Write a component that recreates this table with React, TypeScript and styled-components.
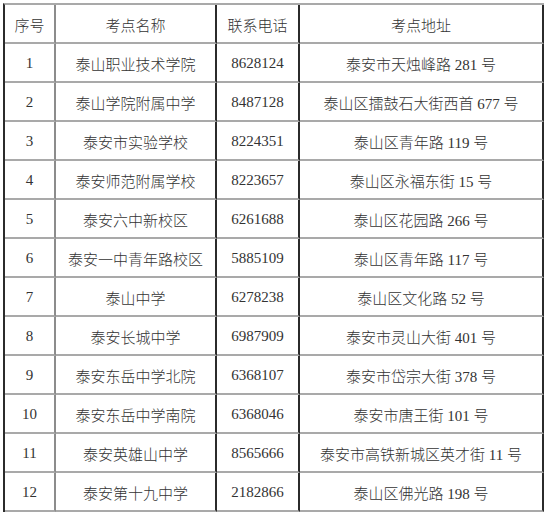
import React from "react";
import styled, { createGlobalStyle } from "styled-components";

const GlobalStyle = createGlobalStyle`
  html, body {
    margin: 0;
    padding: 0;
    background: #ffffff;
  }
  body {
    padding: 3px 0 0 3px;
    font-family: "Liberation Serif", "Noto Sans CJK SC", serif;
  }
`;

const Table = styled.div`
  display: grid;
  grid-template-columns: 51px 161px 83px 244px;
  grid-auto-rows: 39px;
  width: max-content;
  border-top: 2px solid #a9a9a9;
  border-left: 2px solid #2b2b2b;
`;

const Cell = styled.div<{ $col: number }>`
  box-sizing: border-box;
  display: flex;
  align-items: center;
  justify-content: center;
  border-bottom: 2px solid #a9a9a9;
  border-right: 2px solid ${({ $col }) => ($col === 0 ? "#8c8c8c" : "#2b2b2b")};
  font-family: "Liberation Serif", "Noto Sans CJK SC", serif;
  font-size: 15px;
  font-weight: 300;
  color: #333333;
  white-space: nowrap;
  padding-top: 1px;
`;

const headers = ["序号", "考点名称", "联系电话", "考点地址"];

const rows: string[][] = [
  ["1", "泰山职业技术学院", "8628124", "泰安市天烛峰路 281 号"],
  ["2", "泰山学院附属中学", "8487128", "泰山区擂鼓石大街西首 677 号"],
  ["3", "泰安市实验学校", "8224351", "泰山区青年路 119 号"],
  ["4", "泰安师范附属学校", "8223657", "泰山区永福东街 15 号"],
  ["5", "泰安六中新校区", "6261688", "泰山区花园路 266 号"],
  ["6", "泰安一中青年路校区", "5885109", "泰山区青年路 117 号"],
  ["7", "泰山中学", "6278238", "泰山区文化路 52 号"],
  ["8", "泰安长城中学", "6987909", "泰安市灵山大街 401 号"],
  ["9", "泰安东岳中学北院", "6368107", "泰安市岱宗大街 378 号"],
  ["10", "泰安东岳中学南院", "6368046", "泰安市唐王街 101 号"],
  ["11", "泰安英雄山中学", "8565666", "泰安市高铁新城区英才街 11 号"],
  ["12", "泰安第十九中学", "2182866", "泰山区佛光路 198 号"],
];

const App: React.FC = () => {
  return (
    <>
      <GlobalStyle />
      <Table>
        {headers.map((h, i) => (
          <Cell key={h} $col={i}>
            {h}
          </Cell>
        ))}
        {rows.map((r) =>
          r.map((v, i) => (
            <Cell key={r[0] + "-" + i} $col={i}>
              {v}
            </Cell>
          ))
        )}
      </Table>
    </>
  );
};

export default App;
